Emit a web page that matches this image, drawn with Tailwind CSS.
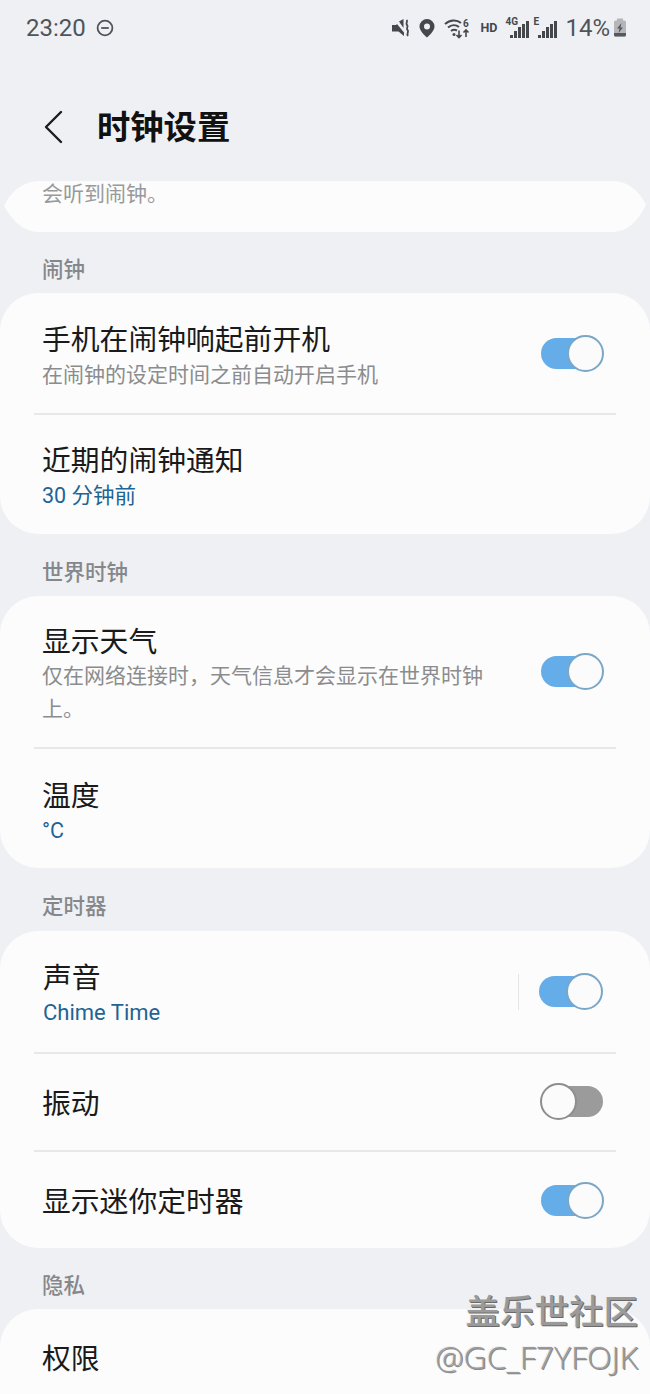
<!DOCTYPE html>
<html lang="zh-CN">
<head>
    <meta charset="UTF-8">
    <meta name="viewport" content="width=device-width, initial-scale=1.0">
    <title>时钟设置</title>
    <script src="https://cdn.jsdelivr.net/npm/@tailwindcss/browser@4"></script>
</head>
<body class="bg-[#eef0f4] font-['Roboto','Noto_Sans_CJK_SC',sans-serif]">
<div class="relative w-[650px] h-[1394px] overflow-hidden">

    <!-- status bar -->
    <div class="flex items-center justify-between h-[56px] pl-[26px] pr-[24px] text-[#50545a]">
        <div class="flex items-center gap-[10px]">
            <span class="text-[24px] leading-none">23:20</span>
            <svg width="18" height="18" viewBox="0 0 18 18" fill="none" stroke="#50545a" stroke-width="1.8"><circle cx="9" cy="9" r="7.4"/><path d="M5.2 9h7.6"/></svg>
        </div>
        <div class="flex items-center">
            <svg width="20" height="20" viewBox="0 0 20 20"><path fill="#44484d" d="M1 7h4l1-1 7 8.500V18l-5.500-4.500H1zM8 3.500 12.500 1v9z"/><path d="M15.500 2c2 2-1.500 3 .5 5s-1.500 3 .5 5-1.500 3 .5 6" fill="none" stroke="#44484d" stroke-width="1.800"/></svg>
            <svg class="ml-[8px]" width="16" height="20" viewBox="0 0 16 20"><path fill-rule="evenodd" fill="#44484d" d="M8 1a7.500 7.500 0 0 1 7.500 7.500c0 4-4.500 8.500-7.500 11-3-2.500-7.500-7-7.500-11A7.500 7.500 0 0 1 8 1zm0 4.500a3 3 0 1 0 0 6 3 3 0 0 0 0-6z"/></svg>
            <svg class="ml-[9px]" width="28" height="22" viewBox="0 0 28 22" fill="none" stroke="#44484d" stroke-width="2"><path d="M1 7c5-4.500 12-4.500 16-1M4 10.500c3.500-3 8-3 11-.5M7 14c2-1.500 4-1.500 6-.5"/><circle cx="10" cy="17.500" r="1.500" fill="#44484d" stroke="none"/><path d="M15 13.500v7m-2.500-2.500 2.500 2.500 2.500-2.500M22 20v-7m-2.500 2.500L22 13l2.500 2.500" stroke-width="1.600"/><text x="19" y="10" font-size="10" font-weight="700" fill="#44484d" stroke="none" font-family="Roboto">6</text></svg>
            <span class="ml-[8px] w-[16px] text-[12.500px] font-bold text-[#44484d] leading-none">HD</span>
            <div class="ml-[9px] relative w-[24px] h-[22px]">
                <span class="absolute left-0 top-0 text-[10px] font-bold leading-none text-[#44484d]">4G</span>
                <svg class="absolute left-0 top-0" width="24" height="22" viewBox="0 0 24 22" fill="#44484d"><rect x="5" y="18" width="3" height="3"/><rect x="9" y="14" width="3" height="7"/><rect x="13" y="10" width="3" height="11"/><rect x="17" y="7" width="3" height="14"/><rect x="21" y="4" width="3" height="17"/></svg>
            </div>
            <div class="ml-[4px] relative w-[24px] h-[22px]">
                <span class="absolute left-0 top-0 text-[10px] font-bold leading-none text-[#44484d]">E</span>
                <svg class="absolute left-0 top-0" width="24" height="22" viewBox="0 0 24 22" fill="#44484d"><rect x="5" y="18" width="3" height="3"/><rect x="9" y="14" width="3" height="7"/><rect x="13" y="10" width="3" height="11"/><rect x="17" y="7" width="3" height="14"/><rect x="21" y="4" width="3" height="17"/></svg>
            </div>
            <span class="ml-[8px] text-[24px] leading-none text-[#50545a]">14%</span>
            <svg class="ml-[3px] -mr-[1px]" width="14" height="20" viewBox="0 0 14 20"><rect x="4" y="0.500" width="6" height="3" fill="#b4b6b9"/><rect x="1" y="2.500" width="12" height="16" rx="1.500" fill="#b4b6b9"/><path d="M1 15h12v2a1.500 1.500 0 0 1-1.500 1.500h-9A1.500 1.500 0 0 1 1 17z" fill="#55585c"/><path d="M8.500 5 4 10.500h2.500L5.500 15 10 9.500H7.500z" fill="#55585c"/></svg>
        </div>
    </div>

    <!-- header -->
    <div class="flex items-center h-[70px] mt-[36px]">
        <svg class="ml-[43px]" width="20" height="34" viewBox="0 0 20 34" fill="none" stroke="#1c1c1c" stroke-width="2.400" stroke-linecap="round" stroke-linejoin="round"><path d="M18 2 3 17l15 15"/></svg>
        <h1 class="ml-[34px] pt-[1px] text-[33.300px] font-bold text-[#111] leading-none">时钟设置</h1>
    </div>

    <!-- scrolled top card -->
    <div class="mt-[19px] h-[51px] bg-[#fcfcfc] [clip-path:path('M40_0H612C630_0_640_12_646_24C640_36_630_51_612_51H38C22_51_10_36_4_25C10_12_22_0_40_0Z')] pl-[42px] text-[21px] leading-[26px] text-[#98999b]">会听到闹钟。</div>

    <div class="px-[42px] mt-[23px] h-[28px] text-[21.500px] leading-[30px] font-medium text-[#85878b]">闹钟</div>
    <div class="mt-[10px] bg-[#fcfcfc] rounded-[38px]">
        <div class="flex items-center h-[120px] pl-[42px] pr-[46px]">
            <div class="flex-1 pt-[4px]">
                <div class="text-[28.800px] leading-[38px] text-[#1a1a1a]">手机在闹钟响起前开机</div>
                <div class="mt-[1px] text-[21px] leading-[30px] text-[#8b8c8e]">在闹钟的设定时间之前自动开启手机</div>
            </div>
            <div class="relative w-[63px] h-[37px] flex items-center">
                <div class="w-[60px] h-[31px] rounded-full bg-[#64ade9]"></div>
                <div class="absolute right-0 top-0 w-[37px] h-[37px] rounded-full bg-[#fbfbfb] border-2 border-[#7ba7c7]"></div>
            </div>
        </div>
        <div class="mx-[34px] h-[2px] bg-[#e8e8e8]"></div>
        <div class="flex flex-col justify-center h-[119px] px-[42px] pt-[3px]">
            <div class="text-[28.800px] leading-[38px] text-[#1a1a1a]">近期的闹钟通知</div>
            <div class="mt-[1px] text-[21.500px] leading-[30px] text-[#1e6494]">30 分钟前</div>
        </div>
    </div>

    <div class="px-[42px] mt-[24px] h-[28px] text-[21.500px] leading-[30px] font-medium text-[#85878b]">世界时钟</div>
    <div class="mt-[10px] bg-[#fcfcfc] rounded-[38px]">
        <div class="flex items-center h-[151px] pl-[42px] pr-[46px]">
            <div class="flex-1 pt-[5px]">
                <div class="text-[28.800px] leading-[38px] text-[#1a1a1a]">显示天气</div>
                <div class="-mt-[1px] w-[450px] text-[21px] leading-[33px] text-[#8b8c8e]">仅在网络连接时，天气信息才会显示在世界时钟上。</div>
            </div>
            <div class="relative w-[63px] h-[37px] flex items-center">
                <div class="w-[60px] h-[31px] rounded-full bg-[#64ade9]"></div>
                <div class="absolute right-0 top-0 w-[37px] h-[37px] rounded-full bg-[#fbfbfb] border-2 border-[#7ba7c7]"></div>
            </div>
        </div>
        <div class="mx-[34px] h-[2px] bg-[#e8e8e8]"></div>
        <div class="flex flex-col justify-center h-[119px] px-[42px] pt-[5px]">
            <div class="text-[28.800px] leading-[38px] text-[#1a1a1a]">温度</div>
            <div class="mt-[1px] text-[21.500px] leading-[30px] text-[#1e6494]">°C</div>
        </div>
    </div>

    <div class="px-[42px] mt-[25px] h-[28px] text-[21.500px] leading-[28px] font-medium text-[#85878b]">定时器</div>
    <div class="mt-[10px] bg-[#fcfcfc] rounded-[38px]">
        <div class="flex items-center h-[121px] pl-[43px] pr-[47px]">
            <div class="flex-1 pt-[3px]">
                <div class="text-[28.800px] leading-[38px] text-[#1a1a1a]">声音</div>
                <div class="mt-[1px] text-[22px] leading-[30px] text-[#1e6494]">Chime Time</div>
            </div>
            <div class="w-px h-[36px] bg-[#e4e4e4] mr-[20px]"></div>
            <div class="relative w-[64px] h-[37px] flex items-center">
                <div class="w-[60px] h-[31px] rounded-full bg-[#64ade9]"></div>
                <div class="absolute right-0 top-0 w-[37px] h-[37px] rounded-full bg-[#fbfbfb] border-2 border-[#7ba7c7]"></div>
            </div>
        </div>
        <div class="mx-[34px] h-[2px] bg-[#e8e8e8]"></div>
        <div class="flex items-center h-[96px] pl-[42px] pr-[47px]">
            <div class="flex-1 pt-[4px] text-[28.800px] leading-[38px] text-[#1a1a1a]">振动</div>
            <div class="relative w-[63px] h-[37px] flex items-center -mt-[2px]">
                <div class="ml-[3px] w-[60px] h-[31px] rounded-full bg-[#9b9b9b]"></div>
                <div class="absolute left-0 top-0 w-[37px] h-[37px] rounded-full bg-[#fbfbfb] border-2 border-[#8e8e8e]"></div>
            </div>
        </div>
        <div class="mx-[34px] h-[2px] bg-[#e8e8e8]"></div>
        <div class="flex items-center h-[96px] pl-[42px] pr-[46px]">
            <div class="flex-1 pt-[4px] text-[28.800px] leading-[38px] text-[#1a1a1a]">显示迷你定时器</div>
            <div class="relative w-[63px] h-[37px] flex items-center">
                <div class="w-[60px] h-[31px] rounded-full bg-[#64ade9]"></div>
                <div class="absolute right-0 top-0 w-[37px] h-[37px] rounded-full bg-[#fbfbfb] border-2 border-[#7ba7c7]"></div>
            </div>
        </div>
    </div>

    <div class="px-[42px] mt-[24px] h-[28px] text-[21.500px] leading-[28px] font-medium text-[#85878b]">隐私</div>
    <div class="mt-[9px] bg-[#fcfcfc] rounded-t-[38px] h-[120px] pl-[42px] pt-[31px]">
        <div class="text-[28.800px] leading-[38px] text-[#1a1a1a]">权限</div>
    </div>

    <!-- watermark -->
    <div class="absolute right-[12px] top-[1292px] flex flex-col items-end text-[#9a9a9a]">
        <div class="text-[34.500px] leading-[40px] font-medium [text-shadow:1px_1px_0_#6a6a6a,-1px_-1px_0_#f0f0f0]">盖乐世社区</div>
        <div class="mt-[6px] text-[32px] leading-[38px] font-light font-['Open_Sans',sans-serif] [text-shadow:1px_1px_0_#8a8a8a,-1px_-1px_0_#f0f0f0]">@GC_F7YFOJK</div>
    </div>
</div>
</body>
</html>
